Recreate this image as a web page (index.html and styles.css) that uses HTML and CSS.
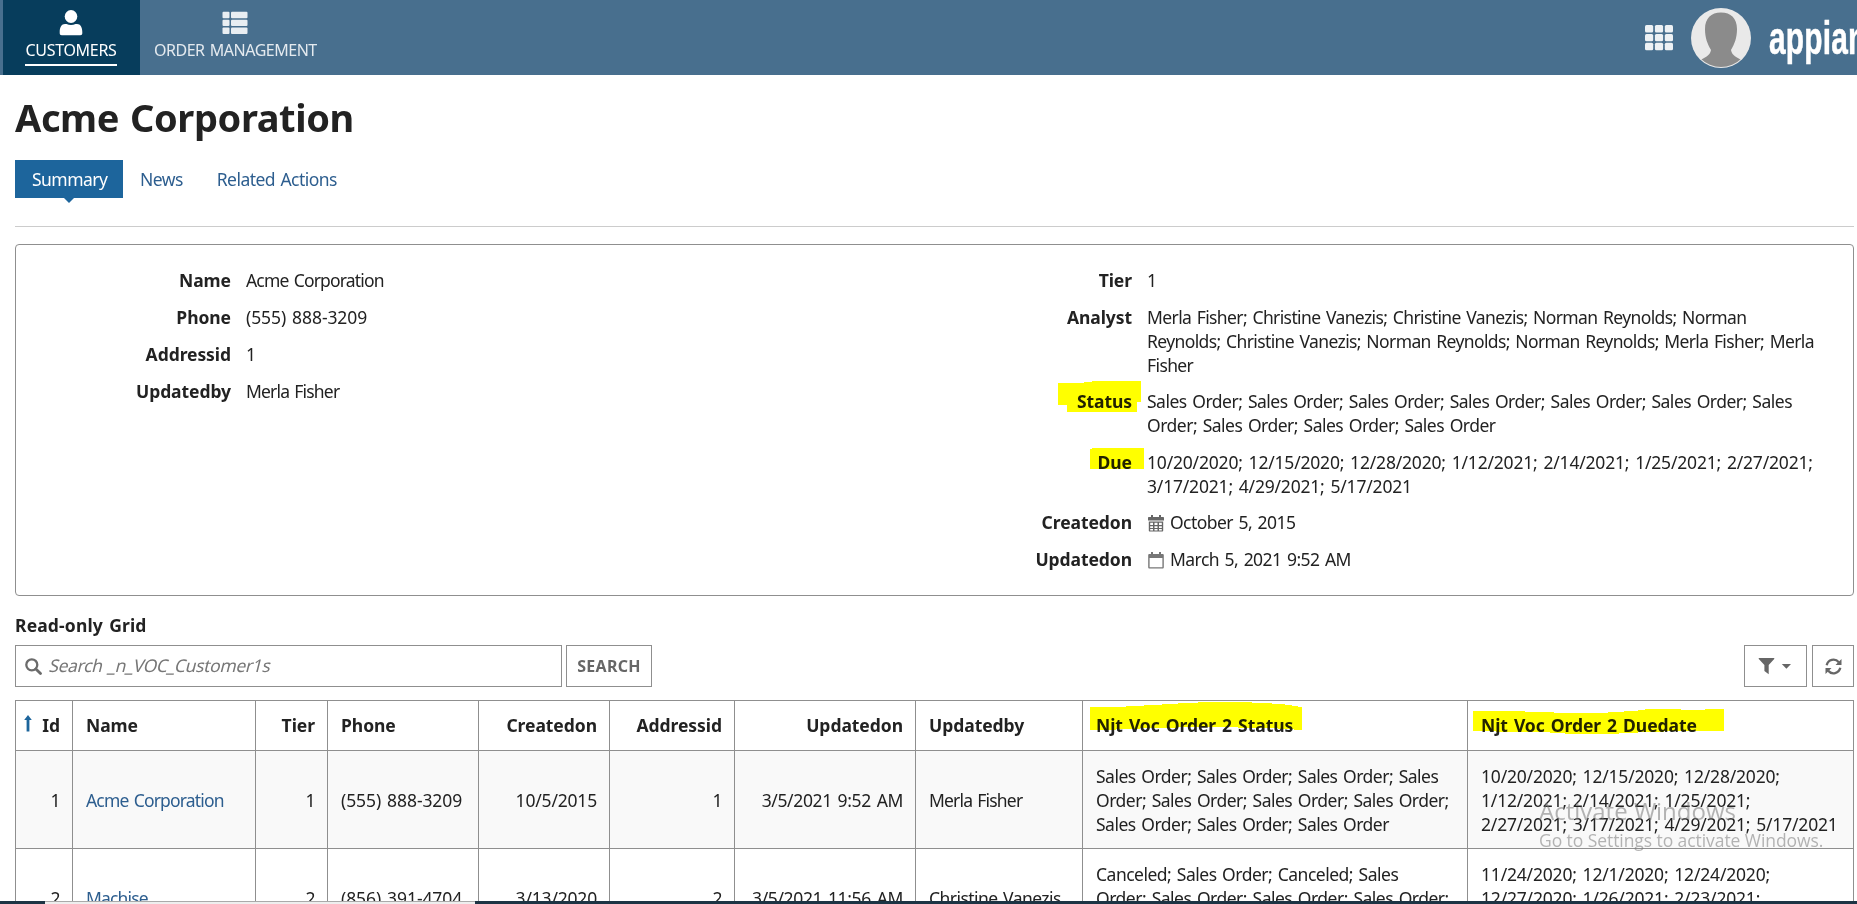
FILE: index.html
```html
<!DOCTYPE html>
<html lang="en">
<head>
<meta charset="utf-8">
<title>Acme Corporation</title>
<link rel="stylesheet" href="styles.css">
</head>
<body>
<header class="topbar">
  <nav class="sites">
    <a class="site active">
      <svg class="ic-user" width="24" height="26" viewBox="0 0 24 26"><ellipse cx="12" cy="6.500" rx="6.300" ry="6.500"/><path d="M6 14h1.500c2.800 1.200 6.200 1.200 9 0H18c3.500 0 5.300 3.500 5.300 8v1.200c0 1.300-.7 2-2 2H2.700c-1.300 0-2-.7-2-2V22c0-4.500 1.800-8 5.300-8z"/></svg>
      <span class="site-name">CUSTOMERS</span>
    </a>
    <a class="site">
      <svg class="ic-list" width="26" height="24" viewBox="0 0 26 24"><rect x=".5" y=".8" width="7" height="6.400" rx="1"/><rect x="9" y=".8" width="16.500" height="6.400" rx="1"/><rect x=".5" y="8.700" width="7" height="6.400" rx="1"/><rect x="9" y="8.700" width="16.500" height="6.400" rx="1"/><rect x=".5" y="16.600" width="7" height="6.400" rx="1"/><rect x="9" y="16.600" width="16.500" height="6.400" rx="1"/></svg>
      <span class="site-name">ORDER MANAGEMENT</span>
    </a>
  </nav>
  <div class="tools">
    <svg class="ic-grid" width="28" height="26" viewBox="0 0 28 26"><g fill="#edf1f4"><rect width="8.200" height="7.400" rx="1.500"/><rect x="9.900" width="8.200" height="7.400" rx="1.500"/><rect x="19.800" width="8.200" height="7.400" rx="1.500"/><rect y="8.900" width="8.200" height="7.400" rx="1.500"/><rect x="9.900" y="8.900" width="8.200" height="7.400" rx="1.500"/><rect x="19.800" y="8.900" width="8.200" height="7.400" rx="1.500"/><rect y="17.800" width="8.200" height="7.400" rx="1.500"/><rect x="9.900" y="17.800" width="8.200" height="7.400" rx="1.500"/><rect x="19.800" y="17.800" width="8.200" height="7.400" rx="1.500"/></g></svg>
    <svg class="avatar" width="60" height="60" viewBox="0 0 60 60"><defs><clipPath id="face"><circle cx="30" cy="30" r="29"/></clipPath></defs><circle cx="30" cy="30" r="30" fill="#e9e9e9"/><path clip-path="url(#face)" fill="#8b8b8b" d="M30 4.500c10 0 16 6 16 16.500 0 9-2.500 15-6 21 1 6 6 7 11 10.500V60H9v-7.500C14 49 19 48 20 42c-3.500-6-6-12-6-21C14 10.500 20 4.500 30 4.500z"/></svg>
    <span class="brand">appian</span>
  </div>
</header>

<main class="page">
  <h1 class="title">Acme Corporation</h1>
  <nav class="tabs">
    <a class="tab current">Summary</a>
    <a class="tab news">News</a>
    <a class="tab">Related Actions</a>
  </nav>

  <section class="card">
    <dl class="fields">
      <dt>Name</dt><dd class="name">Acme Corporation</dd>
      <dt>Phone</dt><dd class="phone">(555) 888-3209</dd>
      <dt>Addressid</dt><dd>1</dd>
      <dt>Updatedby</dt><dd class="name">Merla Fisher</dd>
    </dl>
    <dl class="fields right">
      <dt>Tier</dt><dd>1</dd>
      <dt>Analyst</dt><dd class="people">Merla Fisher; Christine Vanezis; Christine Vanezis; Norman Reynolds; Norman<br>Reynolds; Christine Vanezis; Norman Reynolds; Norman Reynolds; Merla Fisher; Merla<br>Fisher</dd>
      <dt>Status</dt><dd class="status">Sales Order; Sales Order; Sales Order; Sales Order; Sales Order; Sales Order; Sales<br>Order; Sales Order; Sales Order; Sales Order</dd>
      <dt>Due</dt><dd class="num">10/20/2020; 12/15/2020; 12/28/2020; 1/12/2021; 2/14/2021; 1/25/2021; 2/27/2021;<br>3/17/2021; 4/29/2021; 5/17/2021</dd>
      <dt>Createdon</dt><dd><svg class="cal" width="16" height="17" viewBox="0 0 16 17"><path fill="#666" fill-rule="evenodd" d="M3 0h2v2h6V0h2v2h2c.6 0 1 .4 1 1v2.500H0V3c0-.6.400-1 1-1h2zM.8 6.500h14.400v9c0 .6-.4 1-1 1H1.800c-.6 0-1-.4-1-1zM2.200 7.700v2.200h2.800V7.700zM6.500 7.700v2.200h3V7.700zM11 7.700v2.200h2.800V7.700zM2.200 11.200v1.700h2.800v-1.700zM6.500 11.200v1.700h3v-1.700zM11 11.200v1.700h2.800v-1.700zM2.200 14v1.500h2.800V14zM6.500 14v1.500h3V14zM11 14v1.500h2.800V14z"/></svg>October 5, 2015</dd>
      <dt>Updatedon</dt><dd><svg class="cal" width="16" height="17" viewBox="0 0 16 17"><path fill="#777" fill-rule="evenodd" d="M3 0h2v2h6V0h2v2h1.500c.8 0 1.300.5 1.300 1.300v12c0 .8-.5 1.300-1.300 1.300h-13C.7 16.600.2 16.100.2 15.300v-12C.2 2.500.7 2 1.500 2H3zM1.600 6v9.200h12.800V6z"/></svg>March 5, 2021 9:52 AM</dd>
    </dl>
  </section>

  <h2 class="grid-title">Read-only Grid</h2>
  <div class="toolbar">
    <div class="search">
      <svg width="17" height="17" viewBox="0 0 17 17"><circle cx="6.800" cy="6.800" r="5.500" fill="none" stroke="#6b6b6b" stroke-width="2.300"/><path d="M10.900 10.900l4.600 4.600" stroke="#6b6b6b" stroke-width="2.800" stroke-linecap="round"/></svg>
      <span class="placeholder">Search _n_VOC_Customer1s</span>
    </div>
    <button class="btn go">SEARCH</button>
    <button class="btn filter"><svg width="34" height="17" viewBox="0 0 34 17"><path fill="#666" d="M1.200 0h14.600c.6 0 .8.700.4 1.100L10.700 7v9.300L6.400 13V7L.8 1.100C.400.7.600 0 1.200 0zM23.800 6h9.200l-4.600 4.800z"/></svg></button>
    <button class="btn refresh"><svg width="17" height="17" viewBox="0 0 17 17"><g fill="none" stroke="#666" stroke-width="2.300"><path d="M1.700 7.200a6.900 6.900 0 0 1 12.100-2.900"/><path d="M15.300 9.800a6.900 6.900 0 0 1-12.100 2.900"/></g><path fill="#666" d="M16.500 1v6h-6zM.5 16v-6h6z"/></svg></button>
  </div>

  <table class="grid">
    <colgroup><col class="c1"><col class="c2"><col class="c3"><col class="c4"><col class="c5"><col class="c6"><col class="c7"><col class="c8"><col class="c9"><col class="c10"></colgroup>
    <thead>
      <tr><th class="r id"><svg class="sort" width="8" height="17" viewBox="0 0 8 17"><path fill="#1d659c" d="M4 0l3.800 5H5.400v11.500H2.600V5H.2z"/></svg>Id</th><th>Name</th><th class="r">Tier</th><th>Phone</th><th class="r">Createdon</th><th class="r">Addressid</th><th class="r">Updatedon</th><th>Updatedby</th><th>Njt Voc Order 2 Status</th><th>Njt Voc Order 2 Duedate</th></tr>
    </thead>
    <tbody>
      <tr class="odd"><td class="r">1</td><td class="name"><a class="link">Acme Corporation</a></td><td class="r">1</td><td class="phone">(555) 888-3209</td><td class="r num">10/5/2015</td><td class="r">1</td><td class="r stamp">3/5/2021 9:52 AM</td><td class="name">Merla Fisher</td><td class="status">Sales Order; Sales Order; Sales Order; Sales<br>Order; Sales Order; Sales Order; Sales Order;<br>Sales Order; Sales Order; Sales Order</td><td class="num">10/20/2020; 12/15/2020; 12/28/2020;<br>1/12/2021; 2/14/2021; 1/25/2021;<br>2/27/2021; 3/17/2021; 4/29/2021; 5/17/2021</td></tr>
      <tr><td class="r">2</td><td class="name"><a class="link">Machise</a></td><td class="r">2</td><td class="phone">(856) 391-4704</td><td class="r num">3/13/2020</td><td class="r">2</td><td class="r stamp">3/5/2021 11:56 AM</td><td>Christine Vanezis</td><td class="status">Canceled; Sales Order; Canceled; Sales<br>Order; Sales Order; Sales Order; Sales Order;<br>Sales Order</td><td class="num">11/24/2020; 12/1/2020; 12/24/2020;<br>12/27/2020; 1/26/2021; 2/23/2021;<br>3/17/2021</td></tr>
    </tbody>
  </table>
</main>

<svg class="marker" width="1857" height="904" viewBox="0 0 1857 904">
  <path d="M1058 383h26v-1h8v-1h49v21h-4v10h-70v-7h-9z"/>
  <path d="M1090 449h2v-1h52v21h-54z"/>
  <path d="M1090 707h36v-1h18v-1h18v-1h16v-1h20v-1h54v1h20v1h13v1h7v1h6v1h4v23h-8v-1h-16v-1h-40v-1h-60v1h-38v1h-24v1h-26z"/>
  <path d="M1473 711h52v1h29v1h54v-1h16v-1h14v-1h7v-1h36v1h24v-1h19v22h-60v1h-26v1h-19v1h-54v-1h-15v-1h-54v-1h-23z"/>
</svg>
<div class="watermark"><div class="wm-big">Activate Windows</div><div class="wm-small">Go to Settings to activate Windows.</div></div>
<div class="bottom-edge"><span></span></div>
</body>
</html>
```
FILE: styles.css
```css
* { box-sizing: border-box; }
html, body { height: 100%; }
body {
  margin: 0;
  height: 904px;
  overflow: hidden;
  position: relative;
  background: #fff;
  color: #222;
  font: 17.5px/24px "Noto Sans", sans-serif;
  letter-spacing: -0.55px;
  word-spacing: 1.5px;
}
.topbar {
  height: 75px;
  background: #486f8e;
  display: flex;
  justify-content: space-between;
  padding-left: 3px;
  overflow: hidden;
}
.sites { display: flex; }
.site {
  display: flex;
  flex-direction: column;
  align-items: center;
  color: #e4eaef;
  fill: #e9eef2;
  padding: 10px 15px 0 14px;
  font-size: 16px;
  line-height: 20px;
}
.site.active { background: #073d5c; color: #fff; fill: #fff; width: 137px; }
.ic-list { margin: 1px 0; }
.site-name { margin-top: 4px; padding-bottom: 4px; white-space: nowrap; letter-spacing: -0.48px; }
.active .site-name { border-bottom: 2px solid #fff; letter-spacing: -0.3px; }
.tools { display: flex; align-items: center; width: 212px; flex: none; }
.avatar { margin: 0 18px; flex: none; }
.ic-grid { flex: none; }
.brand {
  color: #fff;
  font: bold 46px/54px "Liberation Sans", sans-serif;
  letter-spacing: 0.3px;
  white-space: nowrap;
  transform: scaleX(.65);
  transform-origin: 0 50%;
  -webkit-text-stroke: 0.5px #fff;
}

.page { padding: 0 3px 0 15px; }
.title { margin: 17px 0 0; font-size: 38px; line-height: 50px; font-weight: 700; letter-spacing: -0.4px; }
.tabs { display: flex; height: 67px; margin-top: 18px; border-bottom: 1px solid #ccc; }
.tab { height: 38px; line-height: 38px; padding: 0 17px; color: #2d5e8f; }
.tab.current { position: relative; width: 108px; background: #1d659c; color: #fff; }
.tab.current::after {
  content: "";
  position: absolute;
  left: 49px;
  top: 38px;
  border: 5px solid transparent;
  border-top-color: #1d659c;
  border-bottom: 0;
}
.card {
  margin-top: 17px;
  height: 352px;
  border: 1px solid #8f8f8f;
  border-radius: 4px;
  display: flex;
  padding-top: 23px;
}
.fields {
  margin: 0;
  width: 901px;
  display: grid;
  grid-template-columns: 215px 1fr;
  column-gap: 15px;
  row-gap: 13px;
  align-content: start;
}
.fields.right { row-gap: 12.600px; }
dt { text-align: right; font-weight: 700; letter-spacing: -0.07px; }
dd { margin: 0; white-space: nowrap; }
.num { letter-spacing: -0.19px; }
.phone { letter-spacing: -0.08px; }
.name { letter-spacing: -0.83px; }
.people { letter-spacing: -0.61px; }
.status { letter-spacing: -0.5px; }
.stamp { letter-spacing: -0.35px; }
.cal { margin: 0 6px -3px 1px; }

.grid-title { margin: 17px 0 8px; font-size: 17.500px; line-height: 24px; letter-spacing: 0.15px; }
.toolbar { display: flex; height: 42px; }
.search {
  width: 547px;
  border: 1px solid #8f8f8f;
  display: flex;
  align-items: center;
  gap: 8px;
  padding-left: 9px;
  color: #777;
}
.placeholder { transform: skewX(-14deg); letter-spacing: -0.36px; margin-top: -2px; }
.btn {
  border: 1px solid #8f8f8f;
  background: #fff;
  padding: 0;
  color: #666;
  display: flex;
  align-items: center;
  justify-content: center;
}
.go { width: 86px; margin-left: 4px; font: 700 16px "Noto Sans", sans-serif; letter-spacing: 0.3px; }
.filter { width: 63px; margin-left: auto; padding-right: 2px; }
.refresh { width: 42px; margin-left: 5px; }

.grid { margin-top: 13px; width: 1839px; table-layout: fixed; border-collapse: collapse; }
.c1 { width: 57px; } .c2 { width: 183px; } .c3 { width: 72px; } .c4 { width: 151px; } .c5 { width: 131px; }
.c6 { width: 125px; } .c7 { width: 181px; } .c8 { width: 167px; } .c9 { width: 385px; } .c10 { width: 386px; }
.grid th, .grid td { border: 1px solid #8f8f8f; padding: 13px 12px 12px 13px; text-align: left; white-space: nowrap; }
.grid th { height: 50px; padding-top: 12px; padding-bottom: 13px; font-weight: 700; letter-spacing: -0.05px; }
.grid th.id { padding-left: 4px; }
.grid td { height: 98px; }
.grid .r { text-align: right; }
.odd { background: #f9f9f9; }
.link { color: #2d5e8f; }
.sort { margin-right: 10px; }

.marker { position: absolute; left: 0; top: 0; mix-blend-mode: multiply; fill: #ff0; pointer-events: none; }
.watermark { position: absolute; left: 1539px; top: 795px; color: rgba(120, 120, 120, .55); font-family: "Open Sans", sans-serif; white-space: nowrap; word-spacing: 0; }
.wm-big { font-size: 24px; line-height: 32px; letter-spacing: 0; }
.wm-small { font-size: 17.500px; line-height: 26px; letter-spacing: -0.07px; }
.bottom-edge { position: absolute; left: 0; right: 0; top: 901px; height: 3px; background: #1c3444; }
.bottom-edge span { display: block; margin-left: 45px; width: 430px; height: 3px; background: #eee; border-top: 1px solid #aaa; }
```
